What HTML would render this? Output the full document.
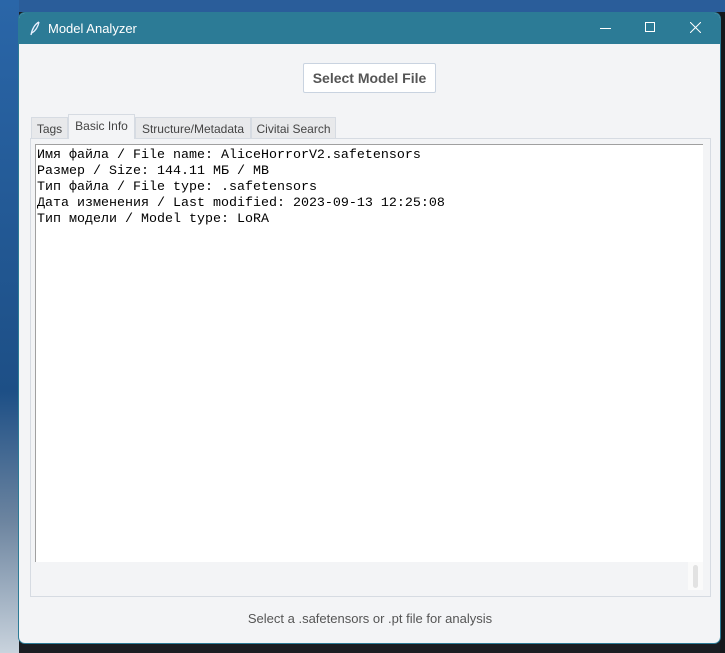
<!DOCTYPE html>
<html><head><meta charset="utf-8"><style>
*{margin:0;padding:0;box-sizing:border-box}
body{width:725px;height:653px;overflow:hidden;position:relative;background:#1a1d22;font-family:"Liberation Sans",sans-serif}
.abs{position:absolute}
</style></head><body>
<div class="abs" style="left:0;top:0;width:725px;height:12px;background:#2a5d9a"></div>
<div class="abs" style="left:0;top:0;width:19px;height:653px;background:linear-gradient(#2a66a8,#1d4f86 60%,#6d85a0 80%,#c9d3dd)"></div>
<div class="abs" style="left:720px;top:12px;width:5px;height:641px;background:#15181c"></div>
<div class="abs" style="left:18px;top:12px;width:703px;height:632px;background:#f3f4f6;border-radius:7px;overflow:hidden;border:1px solid #2c7b96">
  <div class="abs" style="left:0;top:0;width:703px;height:31px;background:#2c7b96;color:#fff;font-size:13px">
    <svg class="abs" style="left:10px;top:8px" width="12" height="16" viewBox="0 0 12 16"><path d="M10 1C6 3 3 8 2 14M10 1C9 6 6 10 3 12" stroke="#e8f0ff" stroke-width="1.3" fill="none"/></svg>
    <span class="abs" style="left:29px;top:8px">Model Analyzer</span>
    <div class="abs" style="left:581px;top:15px;width:11px;height:1px;background:#fff"></div>
    <div class="abs" style="left:626px;top:9px;width:10px;height:10px;border:1px solid #fff"></div>
    <svg class="abs" style="left:671px;top:9px" width="11" height="11" viewBox="0 0 11 11"><path d="M0 0L11 11M11 0L0 11" stroke="#fff" stroke-width="1"/></svg>
  </div>
  <div class="abs" style="left:284px;top:50px;width:133px;height:30px;background:#fff;border:1px solid #c9d3e0;border-radius:2px;font-size:14px;font-weight:bold;color:#555;text-align:center;line-height:28px">Select Model File</div>
  <div class="abs" style="left:11px;top:125px;width:681px;height:459px;border:1px solid #d6dbe2;background:#f3f4f6"></div>
  <div class="abs" style="left:12px;top:104px;width:37px;height:22px;background:#e8e9eb;border:1px solid #d6dbe2;font-size:12px;color:#444;text-align:center;line-height:22px">Tags</div>
  <div class="abs" style="left:49px;top:101px;width:67px;height:25px;background:#f3f4f6;border:1px solid #d6dbe2;border-bottom:none;font-size:12px;color:#444;text-align:center;line-height:22px">Basic Info</div>
  <div class="abs" style="left:116px;top:104px;width:116px;height:22px;background:#e8e9eb;border:1px solid #d6dbe2;font-size:12px;color:#444;text-align:center;line-height:22px">Structure/Metadata</div>
  <div class="abs" style="left:232px;top:104px;width:85px;height:22px;background:#e8e9eb;border:1px solid #d6dbe2;font-size:12px;color:#444;text-align:center;line-height:22px">Civitai Search</div>
  <div class="abs" style="left:16px;top:131px;width:668px;height:418px;background:#fff;border-top:1px solid #a0a0a0;border-left:1px solid #a0a0a0;padding:3px 0 0 1px;font-family:'Liberation Mono',monospace;font-size:13.33px;line-height:16px;color:#000;white-space:pre">Имя файла / File name: AliceHorrorV2.safetensors
Размер / Size: 144.11 МБ / MB
Тип файла / File type: .safetensors
Дата изменения / Last modified: 2023-09-13 12:25:08
Тип модели / Model type: LoRA</div>
  <div class="abs" style="left:669px;top:549px;width:15px;height:28px;background:#fafafa"></div>
  <div class="abs" style="left:674px;top:552px;width:5px;height:23px;background:#e2e2e2;border-radius:3px"></div>
  <div class="abs" style="left:0;top:598px;width:702px;text-align:center;font-size:13px;color:#555">Select a .safetensors or .pt file for analysis</div>
</div>
</body></html>
